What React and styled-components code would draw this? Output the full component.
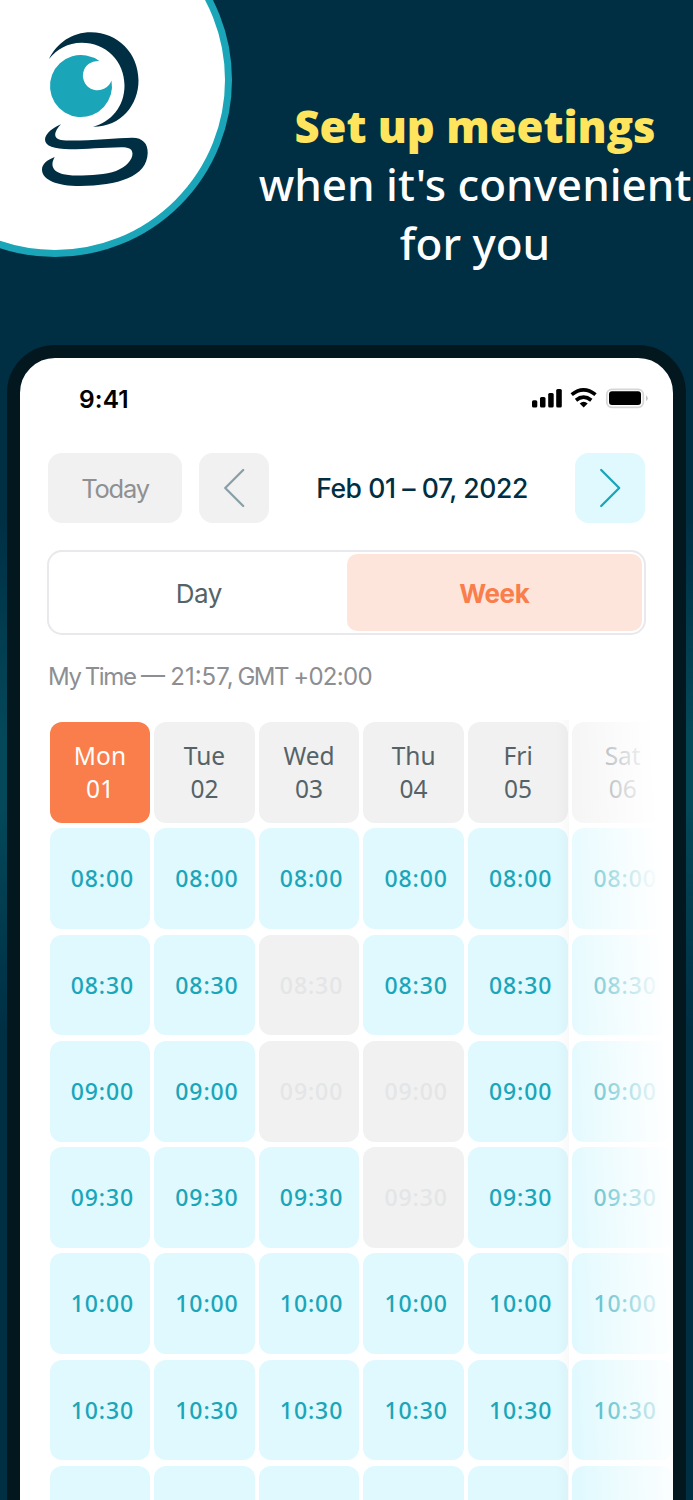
import React from "react";
import styled, { createGlobalStyle } from "styled-components";

const Global = createGlobalStyle`
  *, *::before, *::after { box-sizing: border-box; }
  html, body { margin: 0; padding: 0; background: #002e43; }
  body { width: 693px; height: 1500px; overflow: hidden; }
  button { border: 0; padding: 0; margin: 0; }
`;

const Page = styled.main`
  position: relative;
  width: 693px;
  height: 1500px;
  overflow: hidden;
  display: flex;
  flex-direction: column;
  background:
    linear-gradient(180deg, rgba(4, 73, 90, 0) 510px, #04495a 740px, #04495a 800px, rgba(4, 73, 90, 0) 1040px),
    #002e43;
`;

const Hero = styled.header`
  height: 345px;
  flex: none;
  display: flex;
  justify-content: flex-end;
`;

const LogoBadge = styled.div`
  position: absolute;
  left: -122px;
  top: -97px;
  width: 354px;
  height: 354px;
  border: 7px solid #1ba5b8;
  border-radius: 50%;
  background: #fff;
`;

const Logo = styled.svg`
  position: absolute;
  left: 0;
  top: 0;
`;

const Headline = styled.h1`
  margin: 0;
  padding-top: 97px;
  width: 436px;
  flex: none;
  text-align: center;
  white-space: nowrap;
  color: #fff;
  font: 500 44px/59px "Noto Sans", sans-serif;
`;

const Accent = styled.strong`
  display: block;
  height: 58px;
  font-family: "Open Sans", sans-serif;
  font-size: 43.5px;
  font-weight: 800;
  color: #ffe45e;
`;

const Line = styled.span`
  display: block;
`;

const Phone = styled.section`
  flex: none;
  margin: 0 7px;
  height: 1300px;
  border: 13px solid #03171f;
  border-radius: 48px;
  background: #fff;
  overflow: hidden;
  position: relative;
`;

const StatusBar = styled.div`
  height: 95px;
  padding: 24px 25px 0 59px;
  display: flex;
  justify-content: space-between;
  align-items: flex-start;
`;

const Clock = styled.span`
  font: 600 24.5px/34px Inter, sans-serif;
  letter-spacing: 0.1px;
  color: #000;
`;

const Toolbar = styled.div`
  display: flex;
  padding: 0 28px;
  height: 70px;
  align-items: center;
`;

const ToolButton = styled.button`
  width: ${(p) => p.$width}px;
  height: 70px;
  margin-right: ${(p) => p.$gap || 0}px;
  padding-top: ${(p) => (p.$text ? 2 : 0)}px;
  border-radius: 14px;
  display: flex;
  align-items: center;
  justify-content: center;
  background: ${(p) => (p.$active ? "#dff9fe" : "#f1f1f1")};
  color: #8e9092;
  font: 400 25.5px/32px Inter, sans-serif;
  letter-spacing: -1.2px;
`;

const DateRange = styled.h2`
  margin: 0;
  flex: 1;
  text-align: center;
  white-space: nowrap;
  color: #002e43;
  font: 500 26.5px/32px Inter, sans-serif;
  letter-spacing: -0.4px;
`;

const Segmented = styled.div`
  margin: 27px 27px 0;
  height: 85px;
  padding: 2px;
  display: flex;
  border: 2px solid #e8e8ed;
  border-radius: 15px;
`;

const Segment = styled.button`
  flex: 1;
  padding-top: 2px;
  border-radius: 10px;
  background: ${(p) => (p.$active ? "#fee5dc" : "transparent")};
  color: ${(p) => (p.$active ? "#f97e4b" : "#556368")};
  font: ${(p) => (p.$active ? 700 : 400)} 26px/32px Inter, sans-serif;
  letter-spacing: ${(p) => (p.$active ? -0.4 : -0.6)}px;
`;

const TimeZone = styled.p`
  margin: 26px 0 0 28px;
  white-space: nowrap;
  color: #8c8e92;
  font: 400 24px/32px Inter, sans-serif;
  word-spacing: -1.5px;
`;

const Tracked = styled.span`
  letter-spacing: ${(p) => p.$by}px;
`;

const Grid = styled.div`
  margin: 29px 0 0 29.7px;
  display: grid;
  grid-template-columns: repeat(6, 100.5px);
  column-gap: 4.05px;
  row-gap: 5.6px;
`;

const DayCell = styled.div`
  height: 100.7px;
  padding-top: 17px;
  border-radius: 12px;
  text-align: center;
  background: ${(p) => (p.$active ? "#f97e4b" : "#f1f1f1")};
  color: ${(p) => (p.$active ? "#fff" : "#556368")};
  font: 400 24.5px/33px "Noto Sans", sans-serif;
`;

const Slot = styled.div`
  height: 100.7px;
  border-radius: 12px;
  display: flex;
  align-items: center;
  justify-content: center;
  padding: 0 0 0.6px 5px;
  background: ${(p) => (p.$busy ? "#f1f1f1" : "#dff9fe")};
  color: ${(p) => (p.$busy ? "#e3e5e7" : "#1ba5b8")};
  font: 500 23px/32px "Noto Sans", sans-serif;
  letter-spacing: 0.9px;
`;

const ScrollFade = styled.div`
  position: absolute;
  left: 549px;
  top: 362px;
  right: 0;
  bottom: 132px;
  background: linear-gradient(
    87.3deg,
    rgba(255, 255, 255, 0) 5%,
    rgba(255, 255, 255, 0.3) 25%,
    rgba(255, 255, 255, 0.72) 60%,
    rgba(255, 255, 255, 0.9) 76%,
    #fff 86%
  );

  &::before {
    content: "";
    position: absolute;
    right: 100%;
    top: 0;
    bottom: 0;
    width: 14px;
    background: linear-gradient(90deg, rgba(0, 0, 0, 0), rgba(0, 0, 0, 0.025));
  }
`;

const days = [["Mon", "01"], ["Tue", "02"], ["Wed", "03"], ["Thu", "04"], ["Fri", "05"], ["Sat", "06"]];
const times = ["08:00", "08:30", "09:00", "09:30", "10:00", "10:30", ""];
const busy = new Set(["Wed 08:30", "Wed 09:00", "Thu 09:00", "Thu 09:30"]);

function Chevron({ flip }) {
  return (
    <svg width="24" height="40" viewBox="0 0 24 40" fill="none" stroke={flip ? "#1ba5b8" : "#8aa0a8"} strokeWidth="2.3" strokeLinecap="round" strokeLinejoin="round">
      <path d={flip ? "M3.200 2L21.200 20L3.200 38" : "M21.200 2L3.200 20L21.200 38"} />
    </svg>
  );
}

function StatusIcons() {
  return (
    <svg width="118" height="34" viewBox="530 382 118 34">
      <rect x="532" y="400.3" width="5.3" height="7.2" rx="1.5" />
      <rect x="540" y="397" width="5.5" height="10.5" rx="1.5" />
      <rect x="548.2" y="393" width="5.5" height="14.5" rx="1.5" />
      <rect x="556.2" y="389" width="5.6" height="18.5" rx="1.5" />
      <g fill="none" stroke="#000" strokeWidth="3.7">
        <path d="M571.7 394.6Q583.5 385.2 595.5 394.6" />
        <path d="M576 400.2Q583.5 394.2 591.3 400.2" />
      </g>
      <path d="M579.7 403.4Q583.7 400.2 587.7 403.4L583.7 407.5Z" />
      <rect x="606.8" y="389.3" width="36.5" height="18" rx="5" fill="none" stroke="#d6d6d6" strokeWidth="1.7" />
      <rect x="609" y="391.3" width="32" height="13.8" rx="3" />
      <path d="M646 395.3Q649.6 398 646 401.3Z" fill="#c4c4c4" />
    </svg>
  );
}

export default function App() {
  return (
    <Page>
      <Global />
      <Hero>
        <LogoBadge />
        <Logo width="233" height="258" viewBox="0 0 233 258">
          <path fill="#002e43" d="M49 59C57 43 72 32.3 91 32.3C118 32.3 138.5 53.5 138.5 80.5C138.5 105 121 127 93 126.8C111 122 124.5 106.5 124.5 85.5C124.5 61 106 42.7 81.5 42.7C68 42.7 57 49 49 59Z" />
          <path fill="#1ba5b8" d="M99.3 61A14.7 14.7 0 1 0 111.5 80.5A31 31 0 1 1 99.3 61Z" />
          <path fill="#002e43" d="M61 124.3C54.5 131 50.5 140.5 66 140.5C89 141 116 138 132 137.7C142.5 137.5 148 143.5 147.7 153C147 177 118 185.5 80 186C57 186 42 180 42 169.5C42 164 47 160 54.7 157C49.5 166 52 175.5 77 175.5C91 175.5 106 174.5 116 171C126 167 132.5 160 132.5 153.5C132 148.5 128.5 147.3 121 147.3C102 147.5 87 149.3 70 149.3C54 149 45 146 45 139.5C45 133.5 54 127 61 124.3Z" />
        </Logo>
        <Headline>
          <Accent>Set up meetings</Accent>
          <Line>when it's convenient</Line>
          <Line>for you</Line>
        </Headline>
      </Hero>
      <Phone>
        <StatusBar>
          <Clock>9:41</Clock>
          <StatusIcons />
        </StatusBar>
        <Toolbar>
          <ToolButton $text $width={134} $gap={17}>Today</ToolButton>
          <ToolButton $width={70} aria-label="Previous week"><Chevron /></ToolButton>
          <DateRange>Feb 01 – 07, 2022</DateRange>
          <ToolButton $width={70} $active aria-label="Next week"><Chevron flip /></ToolButton>
        </Toolbar>
        <Segmented>
          <Segment>Day</Segment>
          <Segment $active>Week</Segment>
        </Segmented>
        <TimeZone>
          <Tracked $by={-1.3}>My Time</Tracked> — 21:57,<Tracked $by={-1.5}> GMT</Tracked> <Tracked $by={-0.7}>+02:00</Tracked>
        </TimeZone>
        <Grid>
          {days.map(([name, date]) => (
            <DayCell key={name} $active={name === "Mon"}>
              {name}<br />{date}
            </DayCell>
          ))}
          {times.map((time) =>
            days.map(([name]) => (
              <Slot key={name + time} $busy={busy.has(`${name} ${time}`)}>{time}</Slot>
            ))
          )}
        </Grid>
        <ScrollFade />
      </Phone>
    </Page>
  );
}
